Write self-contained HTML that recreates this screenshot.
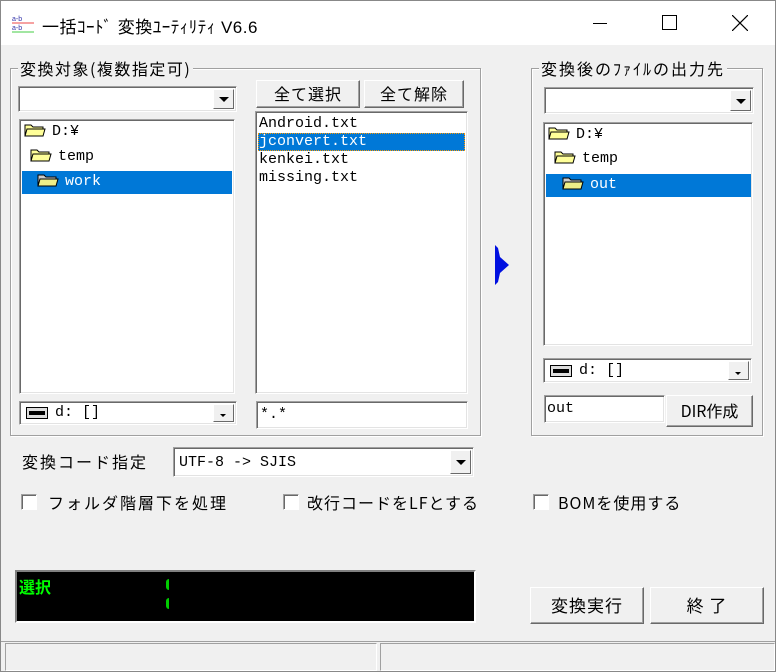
<!DOCTYPE html>
<html><head><meta charset="utf-8"><style>
*{box-sizing:border-box;margin:0;padding:0}
body{width:776px;height:672px;background:#f0f0f0;position:relative;overflow:hidden;font-family:"Liberation Sans","Noto Sans CJK JP",sans-serif;font-size:15px;color:#000}
.a{position:absolute}
.jp{font-family:"Noto Sans CJK JP",sans-serif;letter-spacing:2px;font-size:16px;line-height:20px}
.sunk{position:absolute;background:#fff;border:1px solid;border-color:#a0a0a0 #fff #fff #a0a0a0;box-shadow:inset 1px 1px #696969,inset -1px -1px #e3e3e3}
.btn{position:absolute;background:#f0f0f0;border:1px solid;border-color:#fff #696969 #696969 #fff;box-shadow:inset -1px -1px #a0a0a0;text-align:center;font-family:"Noto Sans CJK JP",sans-serif;letter-spacing:1px;font-size:16px}
.grp{position:absolute;border:1px solid #a0a0a0;box-shadow:1px 1px #fff, inset 1px 1px #fff}
.lbl{position:absolute;background:#f0f0f0;padding:0 2px}
.dd{position:absolute;right:2px;top:2px;bottom:2px;width:21px;background:#f0f0f0;border:1px solid;border-color:#fff #696969 #696969 #fff}
.dd:after{content:"";position:absolute;left:5px;top:50%;margin-top:-2px;border-left:5px solid transparent;border-right:5px solid transparent;border-top:5px solid #000}
.dds:after{left:6px;border-width:3px 3px 0 3px;margin-top:1px}
.mono{font-family:"Liberation Mono","Noto Sans CJK JP",monospace;font-size:15px;line-height:18px}
.sel{background:#0078d7;color:#fff}
.fold{display:inline-block;width:22px;height:14px;vertical-align:-2px;margin-right:6px}
.ck{position:absolute;width:16px;height:16px;background:#fff;border:1px solid;border-color:#a0a0a0 #fff #fff #a0a0a0;box-shadow:inset 1px 1px #696969}
</style></head><body>
<div class="a" style="left:0;top:0;width:776px;height:45px;background:#fff"></div>
<div class="a" style="left:0;top:0;width:776px;height:672px;border:1px solid #888"></div>
<svg class="a" style="left:12px;top:13px" width="24" height="20"><text x="0" y="8" font-size="7" fill="#33a">a-b</text><line x1="0" y1="10" x2="22" y2="10" stroke="#e44"/><text x="0" y="17" font-size="7" fill="#33a">a-b</text><line x1="0" y1="19" x2="22" y2="19" stroke="#4c4"/></svg>
<div class="a" style="left:42px;top:13px;font-size:17px;letter-spacing:0.5px">一括ｺｰﾄﾞ 変換ﾕｰﾃｨﾘﾃｨ V6.6</div>
<div class="a" style="left:593px;top:23px;width:14px;height:1px;background:#000"></div>
<div class="a" style="left:662px;top:15px;width:15px;height:15px;border:1px solid #000"></div>
<svg class="a" style="left:732px;top:15px" width="16" height="16"><path d="M0 0L16 16M16 0L0 16" stroke="#000" stroke-width="1.2"/></svg>

<div class="grp" style="left:10px;top:68px;width:471px;height:368px"></div>
<div class="lbl jp" style="left:18px;top:58px;letter-spacing:1.5px">変換対象(複数指定可)</div>
<div class="sunk" style="left:18px;top:86px;width:219px;height:26px"><div class="dd"></div></div>
<div class="sunk" style="left:19px;top:119px;width:216px;height:275px">
<div class="mono" style="position:absolute;left:4px;top:3px"><svg class="fold" viewBox="0 0 22 14"><path d="M1 2h6l2 2h10v9H1z" fill="#ff9" stroke="#000"/><path d="M3 6h18l-2 7H1z" fill="#ff9" stroke="#000"/></svg>D:¥</div>
<div class="mono" style="position:absolute;left:10px;top:28px"><svg class="fold" viewBox="0 0 22 14"><path d="M1 2h6l2 2h10v9H1z" fill="#ff9" stroke="#000"/><path d="M3 6h18l-2 7H1z" fill="#ff9" stroke="#000"/></svg>temp</div>
<div class="mono sel" style="position:absolute;left:2px;top:51px;width:210px;height:23px;padding:2px 0 0 15px"><svg class="fold" viewBox="0 0 22 14"><path d="M1 2h6l2 2h10v9H1z" fill="#ccc" stroke="#000"/><path d="M3 6h18l-2 7H1z" fill="#ee8" stroke="#000"/></svg>work</div>
</div>
<div class="sunk" style="left:19px;top:401px;width:218px;height:24px"><svg style="position:absolute;left:6px;top:5px" width="22" height="12"><rect x="0.5" y="0.5" width="21" height="11" fill="#ddd" stroke="#000"/><rect x="3" y="4" width="16" height="4" fill="#000"/></svg><span class="mono" style="position:absolute;left:35px;top:2px">d: []</span><div class="dd dds"></div></div>

<div class="btn" style="left:256px;top:80px;width:104px;height:28px;line-height:25px">全て選択</div>
<div class="btn" style="left:364px;top:80px;width:100px;height:28px;line-height:25px">全て解除</div>
<div class="sunk" style="left:255px;top:111px;width:213px;height:283px">
<div class="mono" style="position:absolute;left:3px;top:3px">Android.txt</div>
<div class="mono sel" style="position:absolute;left:2px;top:21px;width:207px;height:18px;padding-left:1px;outline:1px dotted #f90;outline-offset:-1px">jconvert.txt</div>
<div class="mono" style="position:absolute;left:3px;top:39px">kenkei.txt</div>
<div class="mono" style="position:absolute;left:3px;top:57px">missing.txt</div>
</div>
<div class="sunk" style="left:256px;top:401px;width:212px;height:28px"><span class="mono" style="position:absolute;left:3px;top:4px">*.*</span></div>

<svg class="a" style="left:495px;top:245px" width="16" height="40"><path d="M0 0L3 3L5 12L14 20L5 28L3 37L0 40z" fill="#0010e0"/></svg>

<div class="grp" style="left:531px;top:68px;width:232px;height:368px"></div>
<div class="lbl jp" style="left:539px;top:58px;letter-spacing:2px">変換後のﾌｧｲﾙの出力先</div>
<div class="sunk" style="left:544px;top:87px;width:210px;height:27px"><div class="dd"></div></div>
<div class="sunk" style="left:543px;top:122px;width:210px;height:224px">
<div class="mono" style="position:absolute;left:4px;top:3px"><svg class="fold" viewBox="0 0 22 14"><path d="M1 2h6l2 2h10v9H1z" fill="#ff9" stroke="#000"/><path d="M3 6h18l-2 7H1z" fill="#ff9" stroke="#000"/></svg>D:¥</div>
<div class="mono" style="position:absolute;left:10px;top:27px"><svg class="fold" viewBox="0 0 22 14"><path d="M1 2h6l2 2h10v9H1z" fill="#ff9" stroke="#000"/><path d="M3 6h18l-2 7H1z" fill="#ff9" stroke="#000"/></svg>temp</div>
<div class="mono sel" style="position:absolute;left:2px;top:51px;width:205px;height:23px;padding:2px 0 0 16px"><svg class="fold" viewBox="0 0 22 14"><path d="M1 2h6l2 2h10v9H1z" fill="#ccc" stroke="#000"/><path d="M3 6h18l-2 7H1z" fill="#ee8" stroke="#000"/></svg>out</div>
</div>
<div class="sunk" style="left:543px;top:358px;width:209px;height:25px"><svg style="position:absolute;left:6px;top:6px" width="22" height="12"><rect x="0.5" y="0.5" width="21" height="11" fill="#ddd" stroke="#000"/><rect x="3" y="4" width="16" height="4" fill="#000"/></svg><span class="mono" style="position:absolute;left:35px;top:3px">d: []</span><div class="dd dds"></div></div>
<div class="sunk" style="left:544px;top:395px;width:121px;height:28px"><span class="mono" style="position:absolute;left:2px;top:4px">out</span></div>
<div class="btn" style="left:666px;top:395px;width:87px;height:32px;line-height:29px;letter-spacing:0">DIR作成</div>

<div class="a jp" style="left:22px;top:451px">変換コード指定</div>
<div class="sunk" style="left:173px;top:447px;width:301px;height:30px"><span class="mono" style="position:absolute;left:5px;top:6px">UTF-8 -&gt; SJIS</span><div class="dd"></div></div>

<div class="ck" style="left:21px;top:494px"></div><div class="a jp" style="left:48px;top:492px">フォルダ階層下を処理</div>
<div class="ck" style="left:283px;top:494px"></div><div class="a jp" style="left:307px;top:492px;letter-spacing:1px">改行コードをLFとする</div>
<div class="ck" style="left:533px;top:494px"></div><div class="a jp" style="left:558px;top:492px;letter-spacing:1px">BOMを使用する</div>

<div class="a" style="left:15px;top:570px;width:461px;height:53px;background:#000;border:2px solid;border-color:#808080 #fff #fff #808080"></div>
<div class="a" style="left:19px;top:574px;color:#0f0;font-weight:bold;font-size:16px">選択</div>
<div class="a" style="left:166px;top:579px;width:3px;height:11px;background:#0c0;border-radius:3px 0 0 3px"></div>
<div class="a" style="left:166px;top:598px;width:3px;height:11px;background:#0c0;border-radius:3px 0 0 3px"></div>

<div class="btn" style="left:530px;top:587px;width:114px;height:37px;line-height:34px;font-size:17px">変換実行</div>
<div class="btn" style="left:650px;top:587px;width:114px;height:37px;line-height:34px;font-size:17px">終 了</div>

<div class="a" style="left:1px;top:641px;width:774px;height:1px;background:#a0a0a0"></div>
<div class="a" style="left:5px;top:643px;width:372px;height:28px;border:1px solid;border-color:#a0a0a0 #fff #fff #a0a0a0"></div>
<div class="a" style="left:380px;top:643px;width:395px;height:28px;border:1px solid;border-color:#a0a0a0 #fff #fff #a0a0a0"></div>
</body></html>
